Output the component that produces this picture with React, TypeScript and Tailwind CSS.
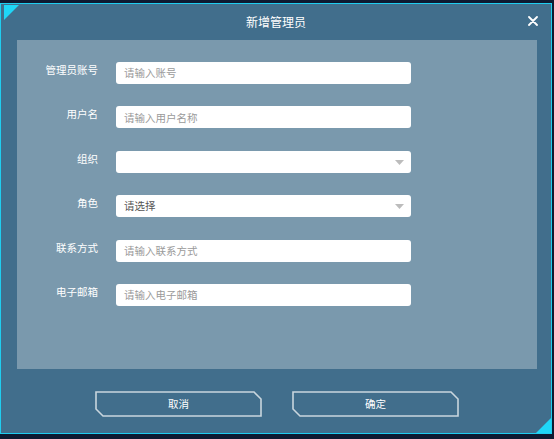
import React from 'react'

const fields: { label: string; placeholder: string; kind: 'input' | 'select'; value?: string }[] = [
  { label: '管理员账号', placeholder: '请输入账号', kind: 'input' },
  { label: '用户名', placeholder: '请输入用户名称', kind: 'input' },
  { label: '组织', placeholder: '', kind: 'select' },
  { label: '角色', placeholder: '', kind: 'select', value: '请选择' },
  { label: '联系方式', placeholder: '请输入联系方式', kind: 'input' },
  { label: '电子邮箱', placeholder: '请输入电子邮箱', kind: 'input' },
]

const font = { fontFamily: '"Noto Sans CJK SC", "Noto Sans", sans-serif' }

function FrameButton({ text }: { text: string }) {
  return (
    <button className="relative w-[167px] h-[26px] flex items-center justify-center text-white text-[10.5px]">
      {/* angled outline */}
      <svg className="absolute inset-0" width="167" height="26" viewBox="0 0 167 26">
        <path
          d="M1 1 H159 L166 8 V25 H8 L1 18 Z"
          fill="none"
          stroke="#c9d6de"
          strokeWidth="1.6"
        />
      </svg>
      <span className="relative">{text}</span>
    </button>
  )
}

export default function App() {
  return (
    <div className="w-[554px] h-[439px] bg-[#0e1a31] pt-[3px] pr-[2px] pb-[5px]" style={font}>
      <div className="relative h-full border border-[#1fcdf0] bg-[#416e8c] flex flex-col">
        {/* corner marks */}
        <svg className="absolute left-[3px] top-[1px]" width="15" height="15" viewBox="0 0 15 15">
          <path d="M0 0 H15 L0 15 Z" fill="#1fd6f7" />
        </svg>
        <svg className="absolute right-0 bottom-0" width="15" height="15" viewBox="0 0 15 15">
          <path d="M15 0 V15 H0 Z" fill="#1fd6f7" />
        </svg>

        {/* header */}
        <div className="h-[36px] flex items-center justify-center relative">
          <span className="text-white text-[12px]">新增管理员</span>
          <svg className="absolute right-[13px] top-[12px]" width="10" height="10" viewBox="0 0 10 10">
            <path d="M1 1 L9 9 M9 1 L1 9" stroke="#ffffff" strokeWidth="1.8" strokeLinecap="round" />
          </svg>
        </div>

        {/* form panel */}
        <div className="ml-[16px] mr-[14px] h-[329px] bg-[#7a99ad] pt-[22px] flex flex-col gap-[22.4px]">
          {fields.map((f) => (
            <div key={f.label} className="flex items-start">
              <label className="w-[81px] text-right text-white text-[10.5px] leading-[15px]">{f.label}</label>
              <div className="ml-[18px] w-[295px] h-[22px] bg-white rounded-[3px] flex items-center px-[8px] relative">
                {f.kind === 'input' ? (
                  <span className="text-[#9a9a9a] text-[10.5px]">{f.placeholder}</span>
                ) : (
                  <>
                    <span className="text-[#555555] text-[10.5px]">{f.value ?? ''}</span>
                    <svg className="absolute right-[7px] top-[9px]" width="9" height="5" viewBox="0 0 9 5">
                      <path d="M0 0 H9 L4.5 5 Z" fill="#bcbcbc" />
                    </svg>
                  </>
                )}
              </div>
            </div>
          ))}
        </div>

        {/* footer buttons */}
        <div className="flex pl-[94px] pt-[22px] gap-[30px]">
          <FrameButton text="取消" />
          <FrameButton text="确定" />
        </div>
      </div>
    </div>
  )
}
